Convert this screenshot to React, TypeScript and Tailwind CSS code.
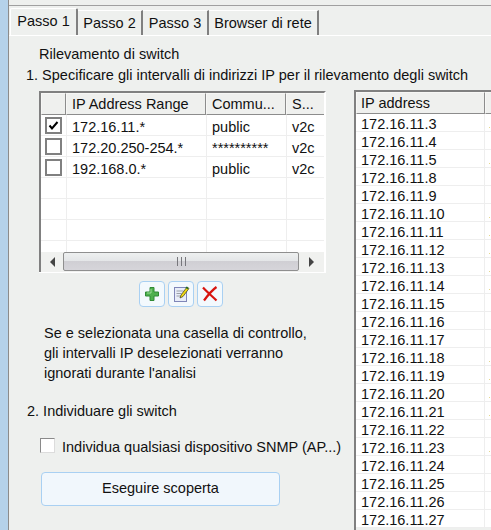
const ranges = [
  { ip: '172.16.11.*', community: 'public', checked: true },
  { ip: '172.20.250-254.*', community: '**********', checked: false },
  { ip: '192.168.0.*', community: 'public', checked: false },
]

const hosts = [3, 4, 5, 8, 9, 10, 11, 12, 13, 14, 15, 16, 17, 18, 19, 20, 21, 22, 23, 24, 25, 26, 27]

// rows whose second column shows a clipped mark
const marked = [3, 5, 10, 11, 12, 13, 14, 18, 19, 20, 21, 23]

function HeaderCell({ label, className }: { label: string; className: string }) {
  return (
    <div className={`flex h-[22px] items-center border border-[#f7f7f5] border-r-[#8c8c8c] border-b-[#8c8c8c] bg-[#eff0ee] pt-px ${className}`}>
      <span className="truncate">{label}</span>
    </div>
  )
}

function CheckBox({ checked }: { checked: boolean }) {
  return (
    <div className="flex h-[17px] w-[17px] items-center justify-center border-2 border-[#808080] bg-white">
      {checked && (
        <svg width="11" height="11" viewBox="0 0 11 11">
          <path d="M1.5 5.500 L4 8.500 L9.500 2" fill="none" stroke="#000" strokeWidth="2" />
        </svg>
      )}
    </div>
  )
}

function ScrollBar() {
  return (
    <div className="flex h-[20px] items-start bg-[#f0f1ef]">
      <div className="flex h-[19px] w-[22px] items-center justify-center">
        <div className="h-0 w-0 border-y-[5px] border-r-[5px] border-y-transparent border-r-[#444]" />
      </div>
      <div className="flex h-[19px] w-[236px] items-center justify-center rounded-[2px] border border-[#8f8f8f] bg-[linear-gradient(#eef0f0_0%,#e4e6e8_45%,#d0cfd4_50%,#d6d5da_100%)]">
        <div className="flex gap-[3px]">
          <div className="h-[9px] w-px bg-[#77777c]" />
          <div className="h-[9px] w-px bg-[#77777c]" />
          <div className="h-[9px] w-px bg-[#77777c]" />
        </div>
      </div>
      <div className="flex h-[19px] flex-1 items-center justify-center">
        <div className="h-0 w-0 border-y-[5px] border-l-[5px] border-y-transparent border-l-[#444]" />
      </div>
    </div>
  )
}

function ToolButton({ children }: { children: React.ReactNode }) {
  return (
    <button className="flex h-[26px] w-[26px] items-center justify-center rounded-[4px] border border-[#a9d0f2] bg-[#f3f9fd]">
      {children}
    </button>
  )
}

export default function App() {
  return (
    <div className="flex h-[530px] w-[491px] overflow-hidden bg-[#eef0ee] font-['Liberation_Sans',sans-serif] text-[14.5px] text-[#111]">
      {/* side strip */}
      <div className="w-[9px] shrink-0 border-r border-[#8c8c8c] bg-[#b5d2ea]" />

      <div className="flex min-w-0 flex-1 flex-col">
        <div className="h-[6px] shrink-0 border-b border-[#a0a0a0]" />

        {/* Tabs */}
        <div className="flex h-[30px] shrink-0 items-end border-b border-white pl-px">
          <div className="flex h-[27px] w-[68px] items-start justify-center rounded-t-[2px] border-t border-l border-white border-r-2 border-r-[#808080] pt-[2px]">
            Passo 1
          </div>
          <div className="flex h-[25px] w-[65px] items-start justify-center border-t border-white border-r-2 border-r-[#808080] pt-[2px]">
            Passo 2
          </div>
          <div className="flex h-[25px] w-[66px] items-start justify-center border-t border-white border-r-2 border-r-[#808080] pt-[2px]">
            Passo 3
          </div>
          <div className="flex h-[25px] w-[110px] items-start justify-center border-t border-white border-r-2 border-r-[#808080] pt-[2px]">
            Browser di rete
          </div>
        </div>

        {/* Content */}
        <div className="flex min-h-0 flex-1">
          <div className="w-[345px] shrink-0">
            <div className="mt-[10px] pl-[30px] leading-[16px]">Rilevamento di switch</div>
            <div className="mt-[5px] whitespace-nowrap pl-[17px] leading-[16px]">
              1. Specificare gli intervalli di indirizzi IP per il rilevamento degli switch
            </div>

            <div className="mt-[8px] ml-[30px] w-[287px] border-2 border-[#808080] border-r-white border-b-0">
              <div className="flex">
                <HeaderCell label="" className="w-[25px]" />
                <HeaderCell label="IP Address Range" className="w-[140px] pl-[5px]" />
                <HeaderCell label="Commu..." className="w-[80px] pl-[5px]" />
                <HeaderCell label="S..." className="flex-1 border-r-0 pl-[5px]" />
              </div>
              <div className="h-[137px] overflow-hidden bg-white">
                {[0, 1, 2, 3, 4, 5, 6].map((i) => {
                  const row = ranges[i]
                  return (
                    <div key={i} className="flex h-[21px] border-b border-[#eeeeee]">
                      <div className="flex w-[26px] items-center justify-center border-r border-[#eeeeee]">
                        {row && <CheckBox checked={row.checked} />}
                      </div>
                      <div className="w-[140px] border-r border-[#eeeeee] pt-[2px] pl-[5px] leading-[20px]">{row?.ip}</div>
                      <div className="w-[80px] border-r border-[#eeeeee] pt-[2px] pl-[5px] leading-[20px]">{row?.community}</div>
                      <div className="flex-1 pt-[2px] pl-[5px] leading-[20px]">{row && 'v2c'}</div>
                    </div>
                  )
                })}
              </div>
              <ScrollBar />
              <div className="-ml-[2px] h-px w-[287px] bg-white" />
            </div>

            {/* Add, edit, remove */}
            <div className="mt-[8px] ml-[130px] flex gap-[3px]">
              <ToolButton>
                <svg width="16" height="16" viewBox="0 0 16 16">
                  <path d="M6 1.500h4V6h4.500v4H10v4.500H6V10H1.500V6H6z" fill="#4eb04e" stroke="#2f8a35" />
                  <path d="M7 3v4H3" fill="none" stroke="#9adf94" />
                </svg>
              </ToolButton>
              <ToolButton>
                <svg width="18" height="18" viewBox="0 0 18 18">
                  <rect x="2.500" y="2.500" width="12" height="14" fill="#e8edf8" stroke="#7f86b8" />
                  <path d="M4.500 6h7M4.500 8.500h5M4.500 11h4" stroke="#9aa0a8" />
                  <path d="M8 13l1-3 6-8 2 1.500-6 8z" fill="#f1d90f" stroke="#3a3a1a" strokeWidth="0.7" />
                  <path d="M14.500 1.500l2 1.500-1 1.300-2-1.500z" fill="#1c6b2a" />
                </svg>
              </ToolButton>
              <ToolButton>
                <svg width="18" height="18" viewBox="0 0 18 18">
                  <path d="M2 2.500C6 7 11 11 15.500 15.500M15.500 2C10 6 7 10 3 15.500" fill="none" stroke="#d8140f" strokeWidth="2.200" />
                </svg>
              </ToolButton>
            </div>

            <div className="mt-[16px] pl-[35px] leading-[20px]">
              <div>Se e selezionata una casella di controllo,</div>
              <div>gli intervalli IP deselezionati verranno</div>
              <div>ignorati durante l'analisi</div>
            </div>

            <div className="mt-[20px] pl-[18px] leading-[16px]">2. Individuare gli switch</div>

            <label className="mt-[19px] ml-[31px] flex items-center gap-[7px] whitespace-nowrap leading-[16px]">
              <span className="mb-[3px] h-[15px] w-[15px] border border-[#8a8a8a] border-r-[#dcdcdc] border-b-[#dcdcdc] bg-white" />
              Individua qualsiasi dispositivo SNMP (AP...)
            </label>

            <button className="mt-[16px] ml-[32px] h-[34px] w-[239px] rounded-[4px] border border-[#a9d0f2] bg-[#f1f7fc]">
              Eseguire scoperta
            </button>
          </div>

          <div className="mt-[54px] flex-1 border-2 border-[#808080] border-r-0 border-b-0">
            <div className="flex">
              <HeaderCell label="IP address" className="w-[129px] pl-[4px]" />
              <HeaderCell label="" className="flex-1 border-r-0" />
            </div>
            <div className="bg-white">
              {hosts.map((h) => (
                <div key={h} className="flex h-[18px] border-b border-[#eeeeee]">
                  <div className="w-[129px] border-r border-[#eeeeee] pt-px pl-[5px] leading-[18px]">172.16.11.{h}</div>
                  <div className="pt-[13px] pl-[4px]">
                    {marked.includes(h) && <div className="h-px w-px bg-[#e6d98c]" />}
                  </div>
                </div>
              ))}
            </div>
          </div>
        </div>
      </div>
    </div>
  )
}
